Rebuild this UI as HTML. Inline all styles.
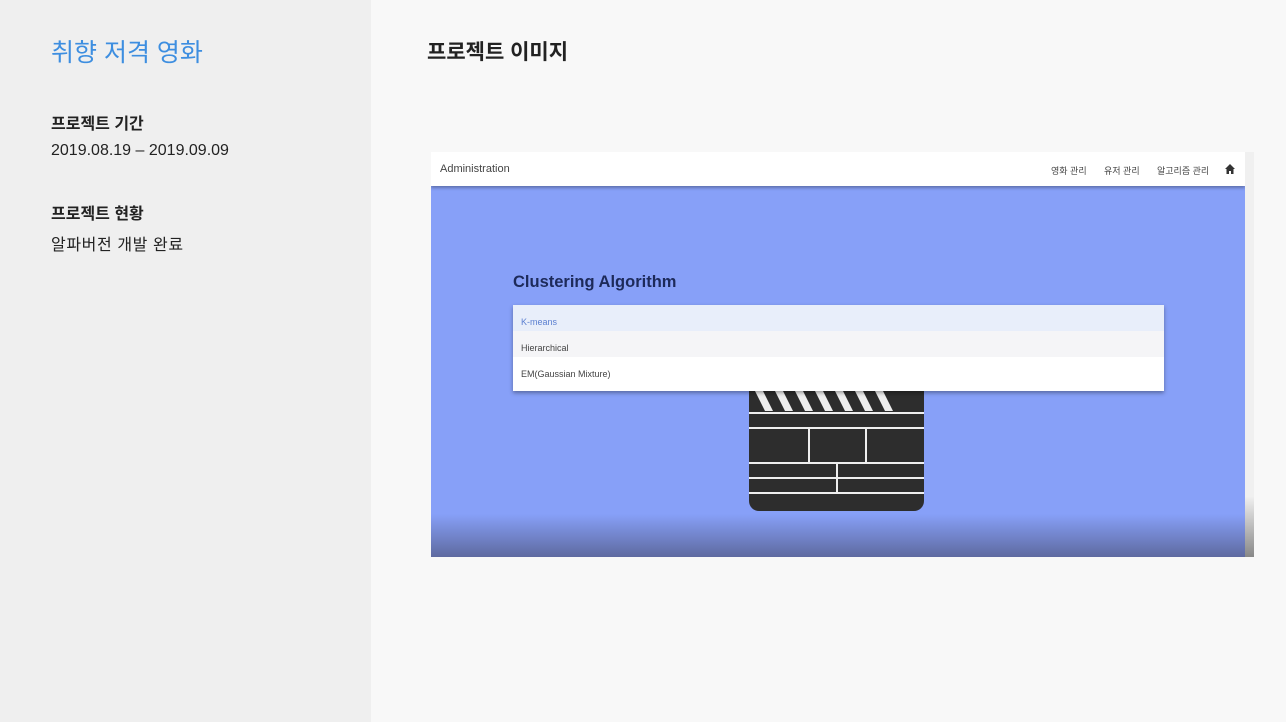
<!DOCTYPE html>
<html><head><meta charset="utf-8"><style>
body{margin:0;width:1286px;height:722px;position:relative;font-family:"Liberation Sans","Noto Sans CJK KR",sans-serif;background:#f8f8f8;overflow:hidden}
.side{position:absolute;left:0;top:0;width:371px;height:722px;background:#efefef}
.t{position:absolute;left:51px;top:33px;font-size:25px;color:#3d8ee0}
.h{position:absolute;left:51px;font-size:16px;font-weight:bold;color:#222}
.p{position:absolute;left:51px;font-size:16px;color:#222}
.mt{position:absolute;left:427px;top:36px;font-size:21px;font-weight:bold;color:#222}
.img{position:absolute;left:431px;top:152px;width:823px;height:405px;background:#87a0f8;overflow:hidden}
.nav{position:absolute;left:0;top:0;width:814px;height:34px;background:#fff;box-shadow:0 2px 3px rgba(0,0,0,.3);font-size:11px;color:#444}
.nav .m{position:absolute;top:12px;font-size:9px}
.sb{position:absolute;right:0;top:0;width:9px;height:405px;background:linear-gradient(#f0f0f0,#f0f0f0 85%,#888)}
.grad{position:absolute;left:0;top:362px;width:814px;height:43px;background:linear-gradient(rgba(90,100,150,0),rgba(90,100,150,.9))}
.dd{position:absolute;left:82px;top:153px;width:651px;height:86px;background:#fff;box-shadow:0 2px 4px rgba(0,0,0,.35);font-size:9px;color:#444}
.dd div{height:26px;line-height:34px;padding-left:8px}
.cb{position:absolute;left:318px;top:239px;width:175px;height:120px;background:#2d2d2d;border-radius:0 0 10px 10px}
</style></head><body>
<div class="side">
<div class="t">취향 저격 영화</div>
<div class="h" style="top:110px">프로젝트 기간</div>
<div class="p" style="top:142px">2019.08.19 – 2019.09.09</div>
<div class="h" style="top:200px">프로젝트 현황</div>
<div class="p" style="top:231px;letter-spacing:0.6px">알파버전 개발 완료</div>
</div>
<div class="mt">프로젝트 이미지</div>
<div class="img">
<div class="nav"><span style="position:absolute;left:9px;top:11px">Administration</span>
<span class="m" style="left:620px">영화 관리</span><span class="m" style="left:673px">유저 관리</span><span class="m" style="left:726px">알고리즘 관리</span>
<svg style="position:absolute;left:794px;top:12px" width="10" height="10" viewBox="0 0 10 10"><path d="M5 0L0 5h1.5v5h2.5V7h2v3h2.5V5H10z" fill="#333"/></svg></div>
<div style="position:absolute;left:82px;top:121px;font-size:16.5px;font-weight:bold;color:#1d2a5a">Clustering Algorithm</div>
<div class="cb">
<svg width="175" height="120"><g fill="#eee"><polygon points="6,0 14,0 24,20 16,20"/><polygon points="26,0 34,0 44,20 36,20"/><polygon points="46,0 54,0 64,20 56,20"/><polygon points="66,0 74,0 84,20 76,20"/><polygon points="86,0 94,0 104,20 96,20"/><polygon points="106,0 114,0 124,20 116,20"/><polygon points="126,0 134,0 144,20 136,20"/></g>
<g stroke="#eee" stroke-width="2"><line x1="0" y1="22" x2="175" y2="22"/><line x1="0" y1="37" x2="175" y2="37"/><line x1="0" y1="72" x2="175" y2="72"/><line x1="0" y1="87" x2="175" y2="87"/><line x1="0" y1="102" x2="175" y2="102"/><line x1="60" y1="37" x2="60" y2="72"/><line x1="117" y1="37" x2="117" y2="72"/><line x1="88" y1="72" x2="88" y2="102"/></g></svg></div>
<div class="dd"><div style="background:#e8eefa;color:#5b7fd0">K-means</div><div style="background:#f5f5f7">Hierarchical</div><div>EM(Gaussian Mixture)</div></div>
<div class="grad"></div>
<div class="sb"></div>
</div>
</body></html>
